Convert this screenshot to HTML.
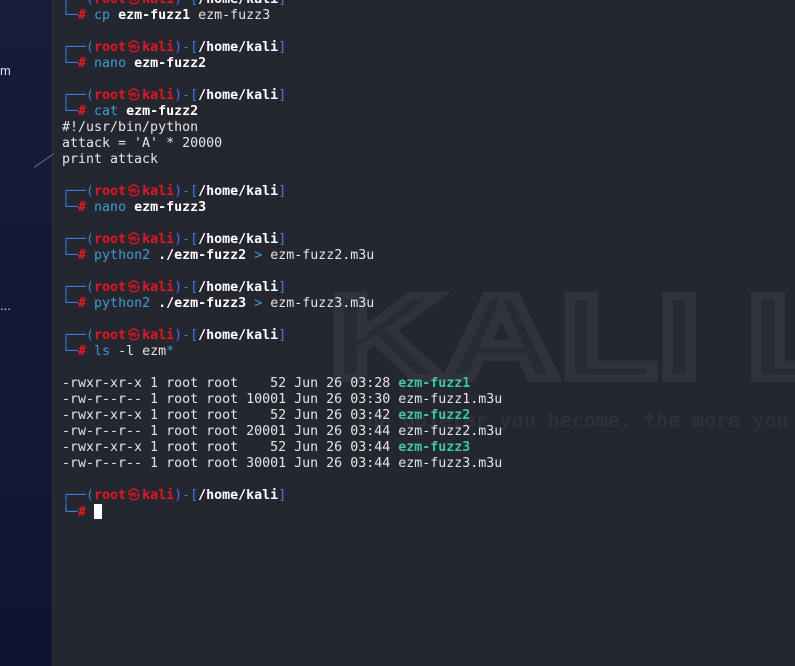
<!DOCTYPE html>
<html><head><meta charset="utf-8"><style>
html,body{margin:0;padding:0;}
body{width:795px;height:666px;overflow:hidden;background:#24272f;position:relative;font-family:"DejaVu Sans Mono","Liberation Mono",monospace;}
#side{position:absolute;left:0;top:0;width:52px;height:666px;background:linear-gradient(#161c3a,#0f1430);border-right:1px solid #2c2f38;}
#side span{position:absolute;color:#e0e0e8;font:13px "Liberation Sans",sans-serif;}
pre{position:absolute;left:62px;top:-8px;margin:0;font-size:13.3px;line-height:16px;color:#e6e6e6;font-family:"DejaVu Sans Mono","Liberation Mono",monospace;}
.b{color:#3b7ddd}.r{color:#e8161f;font-weight:bold}.w{color:#fff;font-weight:bold}.c{color:#3f9cd0}.g{color:#3fc7a4;font-weight:bold}
.k{display:inline-block;width:16px;text-align:center;font-family:"Noto Sans CJK JP",sans-serif;font-size:12px;line-height:12px;color:#e8161f}
.cur{display:inline-block;width:8px;height:15px;background:#fff;vertical-align:-3px}
</style></head><body>
<div id="side"><span style="left:0;top:63px">m</span><span style="left:0;top:298px">...</span>
<div style="position:absolute;left:32px;top:160px;width:24px;height:1px;background:#6a7090;transform:rotate(-35deg)"></div></div>
<svg style="position:absolute;left:0;top:0" width="795" height="666">
<text x="328" y="378" font-family="Liberation Sans" font-weight="bold" font-size="120" fill="#272b35" stroke="#30333c" stroke-width="8" textLength="560" lengthAdjust="spacingAndGlyphs">KALI LI</text>
<text x="355" y="427" font-family="DejaVu Sans Mono" font-weight="bold" font-size="20" fill="#2e313a">the quieter you become, the more you</text>
</svg>
<pre><span class="b">┌──(</span><span class="r">root<span class="k">㉿</span>kali</span><span class="b">)-[</span><span class="w">/home/kali</span><span class="b">]</span>
<span class="b">└─</span><span class="r">#</span> <span class="c">cp</span> <span class="w">ezm-fuzz1</span> ezm-fuzz3

<span class="b">┌──(</span><span class="r">root<span class="k">㉿</span>kali</span><span class="b">)-[</span><span class="w">/home/kali</span><span class="b">]</span>
<span class="b">└─</span><span class="r">#</span> <span class="c">nano</span> <span class="w">ezm-fuzz2</span>

<span class="b">┌──(</span><span class="r">root<span class="k">㉿</span>kali</span><span class="b">)-[</span><span class="w">/home/kali</span><span class="b">]</span>
<span class="b">└─</span><span class="r">#</span> <span class="c">cat</span> <span class="w">ezm-fuzz2</span>
#!/usr/bin/python
attack = 'A' * 20000
print attack

<span class="b">┌──(</span><span class="r">root<span class="k">㉿</span>kali</span><span class="b">)-[</span><span class="w">/home/kali</span><span class="b">]</span>
<span class="b">└─</span><span class="r">#</span> <span class="c">nano</span> <span class="w">ezm-fuzz3</span>

<span class="b">┌──(</span><span class="r">root<span class="k">㉿</span>kali</span><span class="b">)-[</span><span class="w">/home/kali</span><span class="b">]</span>
<span class="b">└─</span><span class="r">#</span> <span class="c">python2</span> <span class="w">./ezm-fuzz2</span> <span class="c">&gt;</span> ezm-fuzz2.m3u

<span class="b">┌──(</span><span class="r">root<span class="k">㉿</span>kali</span><span class="b">)-[</span><span class="w">/home/kali</span><span class="b">]</span>
<span class="b">└─</span><span class="r">#</span> <span class="c">python2</span> <span class="w">./ezm-fuzz3</span> <span class="c">&gt;</span> ezm-fuzz3.m3u

<span class="b">┌──(</span><span class="r">root<span class="k">㉿</span>kali</span><span class="b">)-[</span><span class="w">/home/kali</span><span class="b">]</span>
<span class="b">└─</span><span class="r">#</span> <span class="c">ls</span> -l ezm<span class="c">*</span>

-rwxr-xr-x 1 root root    52 Jun 26 03:28 <span class="g">ezm-fuzz1</span>
-rw-r--r-- 1 root root 10001 Jun 26 03:30 ezm-fuzz1.m3u
-rwxr-xr-x 1 root root    52 Jun 26 03:42 <span class="g">ezm-fuzz2</span>
-rw-r--r-- 1 root root 20001 Jun 26 03:44 ezm-fuzz2.m3u
-rwxr-xr-x 1 root root    52 Jun 26 03:44 <span class="g">ezm-fuzz3</span>
-rw-r--r-- 1 root root 30001 Jun 26 03:44 ezm-fuzz3.m3u

<span class="b">┌──(</span><span class="r">root<span class="k">㉿</span>kali</span><span class="b">)-[</span><span class="w">/home/kali</span><span class="b">]</span>
<span class="b">└─</span><span class="r">#</span> <span class="cur"></span></pre>
</body></html>
